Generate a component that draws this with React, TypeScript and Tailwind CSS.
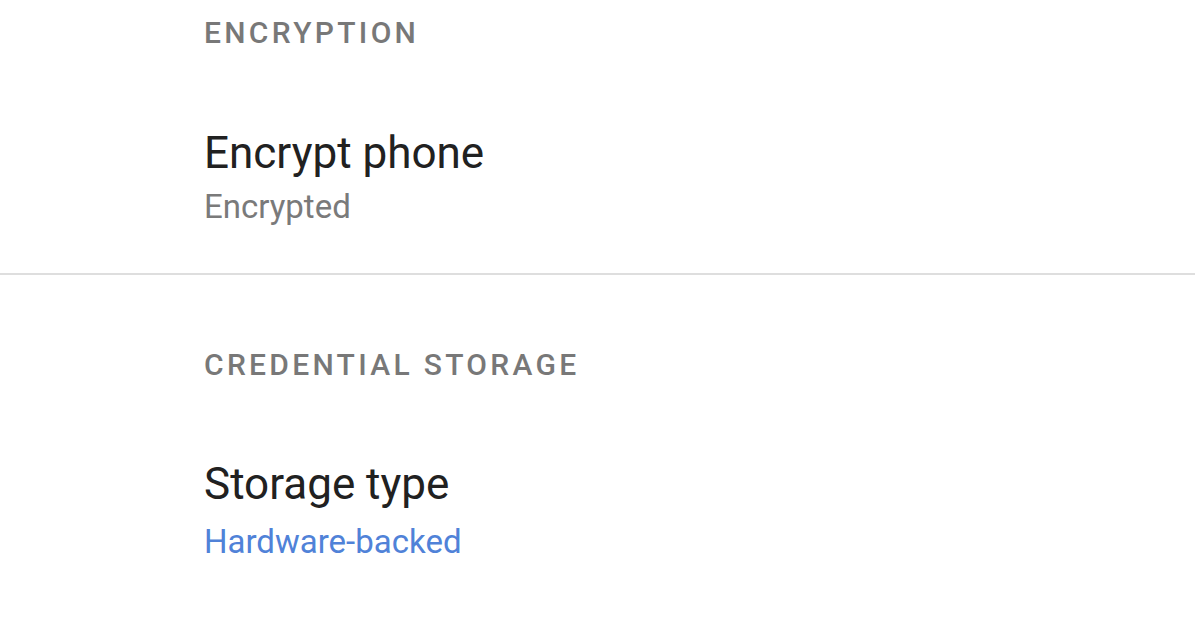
const font = { fontFamily: "Roboto, 'Noto Sans', sans-serif" };

interface Pref {
  title: string;
  summary: string;
  accent?: boolean;
}

const SectionHeader = ({ label, className }: { label: string; className: string }) => (
  <h2 className={`pl-[204px] text-[30px] leading-[36px] font-medium tracking-[0.11em] text-[#787878] ${className}`}>
    {label}
  </h2>
);

const PrefRow = ({ pref, className, gap }: { pref: Pref; className: string; gap: string }) => (
  <div className={`pl-[204px] ${className}`}>
    <p className="text-[44px] leading-[50px] text-[#212121]">{pref.title}</p>
    <p className={`${gap} text-[33px] leading-[38px] ${pref.accent ? "text-[#5082d8]" : "text-[#7a7a7a]"}`}>
      {pref.summary}
    </p>
  </div>
);

export default function App() {
  return (
    <div className="h-[628px] w-[1195px] overflow-hidden bg-white" style={font}>
      <SectionHeader label="ENCRYPTION" className="pt-[15px]" />
      <PrefRow pref={{ title: "Encrypt phone", summary: "Encrypted" }} className="mt-[77px]" gap="mt-[10px]" />
      <div className="mt-[47px] h-[2px] bg-[#dedede]" />
      <SectionHeader label="CREDENTIAL STORAGE" className="mt-[72px]" />
      <PrefRow
        pref={{ title: "Storage type", summary: "Hardware-backed", accent: true }}
        className="mt-[76px]"
        gap="mt-[14px]"
      />
    </div>
  );
}
